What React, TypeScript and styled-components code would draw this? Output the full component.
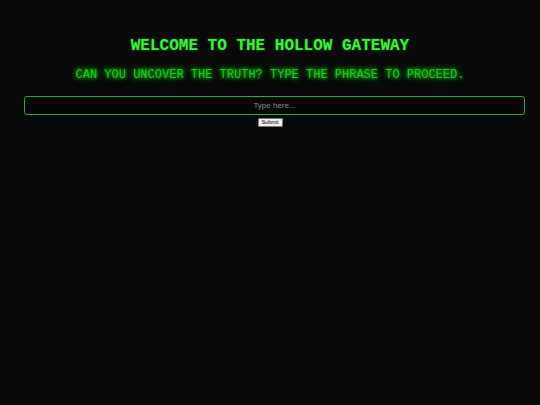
import { useState } from 'react';
import styled, { createGlobalStyle } from 'styled-components';

const GlobalStyle = createGlobalStyle`
    html, body {
        margin: 0;
        padding: 0;
        background: #090909;
        height: 100%;
    }
    #root {
        min-height: 100%;
    }
`;

const Page = styled.div`
    min-height: 405px;
    background: #090909;
    display: flex;
    flex-direction: column;
    align-items: center;
    padding-top: 37px;
    box-sizing: border-box;
    font-family: 'Courier New', Courier, 'Nimbus Mono PS', 'Liberation Mono', monospace;
`;

const Title = styled.h1`
    margin: 0;
    font-size: 16px;
    line-height: 18px;
    font-weight: bold;
    color: #3ef03e;
    text-shadow: 0 0 3px rgba(51, 255, 51, 0.4);
`;

const Subtitle = styled.p`
    margin: 13px 0 0 0;
    font-size: 12px;
    line-height: 14px;
    color: #20c820;
    text-shadow: 0 0 4px #00ff00, 0 0 8px rgba(0, 255, 0, 0.5);
`;

const Form = styled.form`
    width: 100%;
    display: flex;
    flex-direction: column;
    align-items: center;
    margin-top: 14px;
`;

const Input = styled.input`
    align-self: flex-start;
    margin-left: 24px;
    width: 501px;
    height: 19px;
    box-sizing: border-box;
    background: #050505;
    border: 1px solid #2fa82f;
    border-radius: 3px;
    color: #cccccc;
    font-family: 'Liberation Sans', Arial, sans-serif;
    font-size: 8px;
    text-align: center;
    outline: none;

    &::placeholder {
        color: #8a8a8a;
    }
`;

const SubmitButton = styled.button`
    margin-top: 3px;
    width: 25px;
    height: 9px;
    padding: 0;
    font-family: 'Liberation Sans', Arial, sans-serif;
    font-size: 5.5px;
    line-height: 7px;
    color: #000;
    background: #efefef;
    border: 1px solid #767676;
    border-radius: 1px;
`;

function App() {
    const [phrase, setPhrase] = useState<string>('');

    return (
        <>
            <GlobalStyle />
            <Page>
                <Title>WELCOME TO THE HOLLOW GATEWAY</Title>
                <Subtitle>
                    CAN YOU UNCOVER THE TRUTH? TYPE THE PHRASE TO PROCEED.
                </Subtitle>
                <Form onSubmit={(e) => e.preventDefault()}>
                    <Input
                        placeholder='Type here...'
                        value={phrase}
                        onChange={(e) => setPhrase(e.target.value)}
                    />
                    <SubmitButton type='submit'>Submit</SubmitButton>
                </Form>
            </Page>
        </>
    );
}

export default App;
